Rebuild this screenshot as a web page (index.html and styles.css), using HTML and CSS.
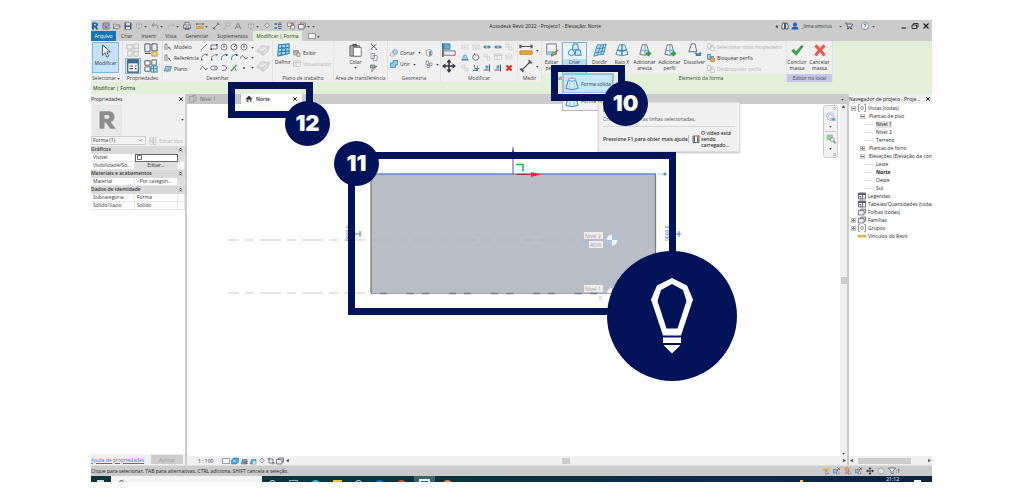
FILE: index.html
```html
<!DOCTYPE html>
<html lang="pt-BR">
<head>
<meta charset="utf-8">
<title>Autodesk Revit 2022 - Projeto1 - Elevação: Norte</title>
<link rel="stylesheet" href="styles.css">
</head>
<body>
<svg class="sprite" aria-hidden="true">
  <symbol id="logo" viewBox="0 0 16 16"><path d="M2 15V1h7q5 0 5 4.500q0 3-3 4l4 5.500h-4.500L7 10H6v5zM6 4v3h2.500q1.500 0 1.500-1.500T8.500 4z" fill="currentColor" fill-rule="evenodd"/></symbol>
  <symbol id="doc" viewBox="0 0 16 16"><path d="M2 2h12v12H2zM2 6h12M5 9h6M5 11h6" fill="none" stroke="#556" stroke-width="1.500"/></symbol>
  <symbol id="open" viewBox="0 0 16 16"><path d="M1 13V4h5l1 2h6v3M1 13l3-5h11l-3 5z" fill="#eee" stroke="#667" stroke-width="1.400"/></symbol>
  <symbol id="save" viewBox="0 0 16 16"><path d="M1 1h12l2 2v12H1z" fill="#4b5870"/><path d="M4 2h8v5H4zM4 10h8v4H4z" fill="#dde"/></symbol>
  <symbol id="sync" viewBox="0 0 16 16"><path d="M3 4l5-2 5 2v7l-5 3-5-3zM3 4l5 2 5-2M8 6v8" fill="#ddd" stroke="#999" stroke-width="1.300"/></symbol>
  <symbol id="undo" viewBox="0 0 16 16"><path d="M6 2L2 6l4 4M2 6h8q5 0 4 7" fill="none" stroke="#778" stroke-width="1.600"/></symbol>
  <symbol id="redo" viewBox="0 0 16 16"><path d="M10 2l4 4-4 4M14 6H6q-5 0-4 7" fill="none" stroke="#aab" stroke-width="1.600"/></symbol>
  <symbol id="print" viewBox="0 0 16 16"><path d="M4 6V1h8v5M1 6h14v7H1zM4 10h8v5H4z" fill="#eee" stroke="#556" stroke-width="1.500"/></symbol>
  <symbol id="measure" viewBox="0 0 16 16"><path d="M1 4h14M1 2v4M15 2v4M3 2L1 4l2 2M13 2l2 2-2 2" fill="none" stroke="#555" stroke-width="1.200"/><path d="M1 9h14v4H1z" fill="#efa935" stroke="#b98731"/></symbol>
  <symbol id="dim" viewBox="0 0 16 16"><path d="M3 13L13 3M1 11l4 4M11 1l4 4" fill="none" stroke="#445" stroke-width="1.300"/><path d="M2 14l1-4 3 3zM14 2l-4 1 3 3z" fill="#556"/></symbol>
  <symbol id="tag" viewBox="0 0 16 16"><circle cx="10" cy="5" r="4" fill="none" stroke="#99a"/><path d="M7 8l-6 6h6" fill="none" stroke="#99a"/></symbol>
  <symbol id="letter" viewBox="0 0 16 16"><path d="M2 14L8 2l6 12M4 10h8" fill="none" stroke="#777" stroke-width="1.800"/></symbol>
  <symbol id="home" viewBox="0 0 16 16"><path d="M1 8l7-7 7 7z" fill="#334"/><path d="M3 8h10v6H3z" fill="#667"/><path d="M7 10h3v4H7z" fill="#fff"/></symbol>
  <symbol id="section" viewBox="0 0 16 16"><path d="M8 2l5 5-5 5-5-5z" fill="#ddd" stroke="#778" stroke-width="1.300"/></symbol>
  <symbol id="thin" viewBox="0 0 16 16"><path d="M1 2h5v4H1zM1 10h5v4H1z" fill="#3b85bb"/><path d="M8 2h7M8 5h7M8 9h7M8 13h7" stroke="#445" stroke-width="1.600"/></symbol>
  <symbol id="closewin" viewBox="0 0 16 16"><path d="M1 2h8v7H1zM7 7h8v7H7z" fill="#eee" stroke="#667" stroke-width="1.300"/><path d="M9 1l5 5M14 1L9 6" stroke="#d43a2f" stroke-width="1.800"/></symbol>
  <symbol id="windows" viewBox="0 0 16 16"><path d="M1 5h11v9H1zM5 5V2h10v8h-3" fill="#eee" stroke="#556" stroke-width="1.500"/></symbol>
  <symbol id="binoc" viewBox="0 0 16 16"><path d="M2 14V7l2-5h3v12zM14 14V7l-2-5H9v12zM7 6h2" fill="#eee" stroke="#334" stroke-width="1.600"/></symbol>
  <symbol id="user" viewBox="0 0 16 16"><circle cx="8" cy="5" r="4" fill="#1c62ad"/><path d="M1 15q0-6 7-6t7 6z" fill="#1c62ad"/></symbol>
  <symbol id="cart" viewBox="0 0 16 16"><path d="M0 2h3l2 8h8l2-6H4" fill="#cde" stroke="#345" stroke-width="1.500"/><circle cx="6" cy="13" r="1.500"/><circle cx="12" cy="13" r="1.500"/></symbol>
  <symbol id="help" viewBox="0 0 16 16"><circle cx="8" cy="8" r="7" fill="#fff" stroke="#456" stroke-width="1.200"/><path d="M6 6q0-2 2-2t2 2q0 1-2 2.500V10M8 11.500V13" fill="none" stroke="#15a" stroke-width="1.600"/></symbol>
  <symbol id="x" viewBox="0 0 16 16"><path d="M3 3l10 10M13 3L3 13" stroke="currentColor" stroke-width="2.600"/></symbol>
  <symbol id="min" viewBox="0 0 16 16"><path d="M3 12h9" stroke="#222" stroke-width="2.200"/></symbol>
  <symbol id="restore" viewBox="0 0 16 16"><path d="M2 6h9v7H2zM5 6V3h9v7h-3" fill="none" stroke="#222" stroke-width="1.800"/></symbol>
  <symbol id="cursor" viewBox="0 0 16 16"><path d="M4 1v12l3-3 2 5 2-1-2-5h4z" fill="#fff" stroke="#456" stroke-width="1.100"/></symbol>
  <symbol id="types" viewBox="0 0 16 16"><path d="M1 2h6v5H1zM2 9h5v6H2zM9 1h5v14H9zM9 6h5M9 10h5" fill="#eee" stroke="#bbb" stroke-width="1.100"/></symbol>
  <symbol id="family" viewBox="0 0 16 16"><path d="M1 1h6v9H1zM9 1h6v8H9zM1 12h7" fill="#e6ebf0" stroke="#556" stroke-width="1.100"/><path d="M9 10h6v5H9z" fill="#f4d37c" stroke="#b59a50"/></symbol>
  <symbol id="props" viewBox="0 0 16 16"><path d="M2 1h12v14H2z" fill="#fff" stroke="#345" stroke-width="1.200"/><path d="M2 1h12v4H2z" fill="#3a6a90"/><path d="M4 8h4M4 11h4M10 8h2M10 11h2" stroke="#345" stroke-width="1.300"/></symbol>
  <symbol id="famtypes" viewBox="0 0 16 16"><path d="M1 2h6v5H1zM1 9h6v5H1zM9 1h5v6H9z" fill="#fff" stroke="#556" stroke-width="1.100"/><path d="M8 8h7v7H8zM8 11h7M11 8v7" fill="#bfe2f5" stroke="#3681ad"/></symbol>
  <symbol id="model" viewBox="0 0 16 16"><path d="M2 14V2h4M6 2v12M10 9l4 5M9 8l1 3 2-1z" fill="none" stroke="#556" stroke-width="1.300"/></symbol>
  <symbol id="plane" viewBox="0 0 16 16"><path d="M3 3h12l-3 9H1z" fill="#8bc7ec" stroke="#2a79ae" stroke-width="1.300"/><path d="M5 15l7-9" stroke="#e58d3a" stroke-width="1.800"/></symbol>
  <symbol id="line" viewBox="0 0 16 16"><path d="M2 14L14 2" stroke="#445" stroke-width="1.400"/></symbol>
  <symbol id="rect" viewBox="0 0 16 16"><path d="M2 12V4h12v8z" fill="none" stroke="#445" stroke-width="1.400"/><path d="M1 11h3v3H1zM12 2h3v3h-3z" fill="#445"/></symbol>
  <symbol id="poly" viewBox="0 0 16 16"><circle cx="8" cy="8" r="6" fill="none" stroke="#445" stroke-width="1.300"/><path d="M8 8V3M6 8h4" stroke="#445" stroke-width="1.300"/></symbol>
  <symbol id="circle" viewBox="0 0 16 16"><circle cx="8" cy="8" r="6" fill="none" stroke="#445" stroke-width="1.300"/><path d="M8 8l4-4" stroke="#c33" stroke-width="1.500"/></symbol>
  <symbol id="arc" viewBox="0 0 16 16"><path d="M3 14Q2 3 13 3" fill="none" stroke="#556" stroke-width="1.400"/><path d="M2 12h3v3H2zM12 2h3v3h-3z" fill="#556"/></symbol>
  <symbol id="arcb" viewBox="0 0 16 16"><path d="M3 14Q2 3 13 3" fill="none" stroke="#1b87c9" stroke-width="2"/><path d="M12 2h3v4h-3z" fill="#445"/></symbol>
  <symbol id="spline" viewBox="0 0 16 16"><path d="M1 11Q4 1 8 8t7 0" fill="none" stroke="#445" stroke-width="1.400"/></symbol>
  <symbol id="ellipse" viewBox="0 0 16 16"><ellipse cx="8" cy="8" rx="7" ry="4" fill="none" stroke="#445" stroke-width="1.300"/><path d="M8 8h5" stroke="#445"/></symbol>
  <symbol id="halfell" viewBox="0 0 16 16"><path d="M4 3q9 0 9 5t-9 5" fill="none" stroke="#445" stroke-width="1.400"/></symbol>
  <symbol id="pick" viewBox="0 0 16 16"><path d="M2 14L13 2" stroke="#2ba336" stroke-width="2.400"/><path d="M9 8l5 5-3 0z" fill="#445"/></symbol>
  <symbol id="dot" viewBox="0 0 16 16"><circle cx="8" cy="8" r="2" fill="#445"/></symbol>
  <symbol id="face" viewBox="0 0 16 16"><path d="M1 9l5-6 9 1-1 5-6 5zM1 9l6 1 8-6M7 10l1 4" fill="#e0e0e0" stroke="#c2c2c2"/></symbol>
  <symbol id="setplane" viewBox="0 0 16 16"><path d="M3 2l12-1v11L2 15zM7 2l-1 13M11 1v12M3 6l12-1M2 10l13-1" fill="#a6d5ef" stroke="#2d83b8" stroke-width="1.200"/></symbol>
  <symbol id="showplane" viewBox="0 0 16 16"><path d="M1 3h10v9H1zM4 3v9M8 3v9M1 6h10" fill="#d8e8f2" stroke="#667"/><path d="M8 8h6v7H8z" fill="#f6d58a" stroke="#667"/></symbol>
  <symbol id="viewer" viewBox="0 0 16 16"><path d="M1 2h14v11H1zM1 5h14M6 5v8" fill="#eee" stroke="#bbb" stroke-width="1.200"/></symbol>
  <symbol id="screen" viewBox="0 0 16 16"><path d="M1 3h14v10H1z" fill="#fff" stroke="#667" stroke-width="1.300"/></symbol>
  <symbol id="paste" viewBox="0 0 16 16"><path d="M1 3h11v12H1z" fill="#aaa" stroke="#666"/><path d="M4 1h5v3H4z" fill="#555"/><path d="M5 5h9v10H5z" fill="#fff" stroke="#667"/></symbol>
  <symbol id="cut" viewBox="0 0 16 16"><path d="M2 2l11 10M13 2L2 12M2 2h2M3 13h2M11 13h3" stroke="#445" stroke-width="1.700"/></symbol>
  <symbol id="copy" viewBox="0 0 16 16"><path d="M2 1h7v10H2zM6 5h8v10H6z" fill="#fff" stroke="#667" stroke-width="1.200"/></symbol>
  <symbol id="match" viewBox="0 0 16 16"><path d="M1 2h9v6H1z" fill="#9ab" stroke="#445"/><path d="M14 4l-7 8-4 3 1-5z" fill="#fff" stroke="#445" stroke-width="1.200"/></symbol>
  <symbol id="cutgeo" viewBox="0 0 16 16"><circle cx="10" cy="6" r="5" fill="#a9d7f2" stroke="#2c7fb4"/><path d="M1 8h7v6H1z" fill="#fff" stroke="#d44"/></symbol>
  <symbol id="join" viewBox="0 0 16 16"><path d="M6 1h9v9h-4v5H1V6h5z" fill="#8fcbee" stroke="#2378b0" stroke-width="1.400"/></symbol>
  <symbol id="cope" viewBox="0 0 16 16"><path d="M3 3l7-2 4 3v8l-6 3-5-3z" fill="#fff" stroke="#556"/><path d="M8 5l5-2v9l-5 2z" fill="#4f9dca"/></symbol>
  <symbol id="beam" viewBox="0 0 16 16"><path d="M2 2h5v7H2zM9 6h5v5H9zM4 11h5v4H4z" fill="#eee" stroke="#667" stroke-width="1.200"/></symbol>
  <symbol id="align" viewBox="0 0 16 16"><path d="M1 0v16" stroke="#334" stroke-width="1.400"/><path d="M2 1h7v6H2z" fill="#62aee0" stroke="#2477ad"/><path d="M2 9h13v5H2z" fill="#eee" stroke="#667"/></symbol>
  <symbol id="move" viewBox="0 0 16 16"><path d="M8 0l3 4H5zM8 16l3-4H5zM0 8l4-3v6zM16 8l-4-3v6z" fill="#334"/><path d="M8 3v10M3 8h10" stroke="#334" stroke-width="1.800"/></symbol>
  <symbol id="mir" viewBox="0 0 16 16"><path d="M2 3v10l4-4zM14 3v10l-4-4zM8 1v14" fill="#eee" stroke="#bbb"/></symbol>
  <symbol id="split" viewBox="0 0 16 16"><path d="M0 8l5-4v8zM16 8l-5-4v8z" fill="#2a8bc6"/><path d="M4 8h3M9 8h3" stroke="#2a8bc6" stroke-width="3"/><path d="M8 4v8" stroke="#c55" stroke-width="1.200"/></symbol>
  <symbol id="off" viewBox="0 0 16 16"><path d="M2 2h6v6H2zM8 8h6v6H8z" fill="#eee" stroke="#bbb"/></symbol>
  <symbol id="offset" viewBox="0 0 16 16"><path d="M2 13l4-9h4l4 9z" fill="#9ed0ee" stroke="#2a7bb0"/><path d="M1 14h14" stroke="#445" stroke-width="1.500"/></symbol>
  <symbol id="rotate" viewBox="0 0 16 16"><path d="M10 3a6 6 0 1 1-5 0M5 0v4h4" fill="none" stroke="#445" stroke-width="1.500"/></symbol>
  <symbol id="ring" viewBox="0 0 16 16"><circle cx="8" cy="8" r="6" fill="#ddd" stroke="#999" stroke-width="1.500"/></symbol>
  <symbol id="trim" viewBox="0 0 16 16"><path d="M2 13h9V3M5 2v7h10" fill="none" stroke="#556" stroke-width="1.400"/><path d="M7 9h5v4H7z" fill="#2a8bc6"/></symbol>
  <symbol id="trimb" viewBox="0 0 16 16"><path d="M13 1v14M1 12h10" stroke="#445" stroke-width="1.800"/><path d="M5 3h6v6H5z" fill="#4aa0d4"/></symbol>
  <symbol id="del" viewBox="0 0 16 16"><path d="M3 3l10 10M13 3L3 13" stroke="#e12f25" stroke-width="4"/></symbol>
  <symbol id="editprof" viewBox="0 0 16 16"><path d="M2 1h11v12H2z" fill="#f3f3f3" stroke="#667"/><path d="M2 9h9l-3 5H2z" fill="#8bc7ec"/><path d="M15 8l-5 6-3 1 1-3z" fill="#efa935" stroke="#667"/></symbol>
  <symbol id="form" viewBox="0 0 16 16"><path d="M4 3L1 13q7 3 14 0L12 3z" fill="#d8eefb" stroke="#2d84ba" stroke-width="1.100"/><ellipse cx="8" cy="3" rx="4" ry="1.800" fill="#fff" stroke="#2d84ba"/><path d="M6 5L5 14M10 5l1 9" stroke="#99c6e0" fill="none"/></symbol>
  <symbol id="create" viewBox="0 0 16 16"><path d="M6 1h5l1 7H5z" fill="#cbe8f8" stroke="#2379b2"/><circle cx="4" cy="11" r="3.500" fill="#e5f4fc" stroke="#2379b2"/><path d="M9 8h5l1 6H8z" fill="#cbe8f8" stroke="#2379b2"/></symbol>
  <symbol id="divide" viewBox="0 0 16 16"><path d="M5 2q5 1 10-1l-3 12q-6 0-11 2zM9 2L5 14M12 2L9 13M4 6q5 1 10-1M2 11q5 0 11-2" fill="#b6dcf2" stroke="#3182b2"/></symbol>
  <symbol id="xray" viewBox="0 0 16 16"><path d="M5 2L1 13q7 3 14 0L11 2z" fill="#eaf5fb" stroke="#3182b2"/><path d="M8 2v12M3 8q5 2 10 0" fill="none" stroke="#3182b2" stroke-width="1.600"/></symbol>
  <symbol id="addform" viewBox="0 0 16 16"><path d="M5 2L2 13q6 2 11 0L10 2z" fill="#eef3f6" stroke="#667"/><path d="M8 2v12M3 8q4 2 9 0" fill="none" stroke="#4aa0d4"/><path d="M12 9v6M9 12h6" stroke="#22a13a" stroke-width="2.200"/></symbol>
  <symbol id="dissolve" viewBox="0 0 16 16"><path d="M4 1L1 10h9L8 1z" fill="#f5f5f5" stroke="#556"/><path d="M8 11q3 4 7 0M9 14h6" fill="none" stroke="#2d84ba" stroke-width="1.800"/></symbol>
  <symbol id="lock" viewBox="0 0 16 16"><path d="M1 6V1h6v10H1z" fill="#8bc7ec" stroke="#2d84ba" stroke-width="1.400"/><path d="M7 8h8v7H7z" fill="#efa935" stroke="#a86e1d"/><path d="M9 8V5h4v3" fill="none" stroke="#667" stroke-width="1.500"/></symbol>
  <symbol id="locko" viewBox="0 0 16 16"><path d="M1 6V1h6v10H1zM7 8h8v7H7zM9 8V4h4v2" fill="#eee" stroke="#bbb" stroke-width="1.300"/></symbol>
  <symbol id="check" viewBox="0 0 16 16"><path d="M2 9l2-2 3 3 6-7 2 1-8 10z" fill="#3fa447" stroke="#2b7d33" stroke-width=".8"/></symbol>
  <symbol id="cancel" viewBox="0 0 16 16"><path d="M4 2l4 4 4-4 2 2-4 4 4 5-2 2-4-5-4 5-2-2 4-5-4-4z" fill="#f0564a" stroke="#cc3b30" stroke-width=".6"/></symbol>
  <symbol id="sheet" viewBox="0 0 16 16"><path d="M1 3h9v11H1zM6 1h8v11h-4" fill="none" stroke="#889" stroke-width="1.200"/></symbol>
  <symbol id="views" viewBox="0 0 16 16"><path d="M4 1H1v14h3M12 1h3v14h-3" fill="none" stroke="#667" stroke-width="1.300"/><circle cx="8" cy="8" r="3" fill="none" stroke="#667" stroke-width="1.300"/></symbol>
  <symbol id="legend" viewBox="0 0 16 16"><path d="M1 2h14v12H1z" fill="#fff" stroke="#445" stroke-width="1.500"/><path d="M1 2h14v4H1z" fill="#567"/><path d="M3 9h4M3 12h4M9 6v8" stroke="#445" stroke-width="1.500"/></symbol>
  <symbol id="link" viewBox="0 0 16 16"><path d="M0 6h16v5H0z" fill="#f0a21c"/><path d="M5 8.500h6" stroke="#fff" stroke-width="1"/></symbol>
  <symbol id="wheel" viewBox="0 0 16 16"><circle cx="7" cy="7" r="6" fill="#eee" stroke="#9aa3ad"/><circle cx="7" cy="7" r="3" fill="#fff" stroke="#9aa3ad"/><path d="M9 10h6v4H9z" fill="#5aa2d6"/></symbol>
  <symbol id="zoomr" viewBox="0 0 16 16"><path d="M1 1h10v9H1z" fill="#8ed08f"/><circle cx="10" cy="9" r="3" fill="#fff" stroke="#667"/><path d="M12 11l3 4" stroke="#667" stroke-width="2"/></symbol>
  <symbol id="bluebox" viewBox="0 0 16 16"><path d="M5 2h10v8l-4 4H1V6z" fill="#48a5dd" stroke="#1d6ea8"/><path d="M4 8h5" stroke="#fff" stroke-width="2"/></symbol>
  <symbol id="sun" viewBox="0 0 16 16"><path d="M2 14l3-9h9v9z" fill="#5aa9d8" stroke="#456"/><path d="M9 8l6 6M15 8l-6 6" stroke="#dc3a2e" stroke-width="2"/></symbol>
  <symbol id="shadow" viewBox="0 0 16 16"><path d="M2 14l3-9h9v9z" fill="#5aa9d8" stroke="#37749c"/><path d="M8 8h5v6H8z" fill="#d9ecf8"/></symbol>
  <symbol id="crop" viewBox="0 0 16 16"><path d="M4 1v11h12M1 4h11v11" fill="none" stroke="#556" stroke-width="1.500"/></symbol>
  <symbol id="selpin" viewBox="0 0 16 16"><path d="M1 3h13v4H1z" fill="#efa935"/><path d="M8 6v9l2-3 3 1z" fill="#fff" stroke="#556"/></symbol>
  <symbol id="selred" viewBox="0 0 16 16"><path d="M1 5h8v7H1z" fill="#7dbde6" stroke="#39698c"/><path d="M9 1l5 5M14 1L9 6" stroke="#dc3a2e" stroke-width="2"/><path d="M8 7v8l2-2 3 0z" fill="#fff" stroke="#556"/></symbol>
  <symbol id="selor" viewBox="0 0 16 16"><circle cx="6" cy="5" r="4" fill="#f3a35c" stroke="#d8592c"/><path d="M2 12h8" stroke="#d8592c" stroke-width="2"/><path d="M9 7v8l2-2 3 0z" fill="#fff" stroke="#556"/></symbol>
  <symbol id="filter" viewBox="0 0 16 16"><path d="M1 2h14L10 8v6l-4-2V8z" fill="#e7edf3" stroke="#456" stroke-width="1.400"/></symbol>
  <symbol id="film" viewBox="0 0 16 16"><path d="M2 2h12v13H2zM5 2v13M11 2v13M2 6h3M2 10h3M11 10h3" fill="#fff" stroke="#345" stroke-width="1.500"/><circle cx="13" cy="3" r="3" fill="#f0763a"/></symbol>
  <symbol id="down" viewBox="0 0 8 8"><path d="M2 3h4L4 6z" fill="currentColor"/></symbol>
  <symbol id="chev" viewBox="0 0 8 8"><path d="M1 2l3 3 3-3" fill="none" stroke="currentColor"/></symbol>
  <symbol id="fold" viewBox="0 0 8 8"><path d="M2 4l2-2 2 2M2 7l2-2 2 2" fill="none" stroke="currentColor" stroke-width="1.400"/></symbol>
  <symbol id="up" viewBox="0 0 8 8"><path d="M1 6h6L4 2z" fill="currentColor"/></symbol>
  <symbol id="left" viewBox="0 0 8 8"><path d="M6 1v6L2 4z" fill="currentColor"/></symbol>
  <symbol id="right" viewBox="0 0 8 8"><path d="M2 1v6l4-3z" fill="currentColor"/></symbol>
</svg>

<main class="app">
  <header class="titlebar">
    <div class="quick">
      <svg class="i8 brand"><use href="#logo"/></svg><svg class="i8"><use href="#doc"/></svg><svg class="i8"><use href="#open"/></svg><svg class="i8"><use href="#save"/></svg><svg class="i8"><use href="#sync"/></svg><svg class="caret"><use href="#down"/></svg><svg class="i8"><use href="#undo"/></svg><svg class="caret"><use href="#down"/></svg><svg class="i8"><use href="#redo"/></svg><svg class="caret"><use href="#down"/></svg><svg class="i8"><use href="#print"/></svg><span class="gap"></span><svg class="i8"><use href="#measure"/></svg><svg class="caret"><use href="#down"/></svg><svg class="i8"><use href="#dim"/></svg><svg class="i8"><use href="#tag"/></svg><svg class="i8"><use href="#letter"/></svg><span class="gap"></span><svg class="i8"><use href="#sync"/></svg><svg class="caret"><use href="#down"/></svg><svg class="i8"><use href="#section"/></svg><svg class="i8"><use href="#thin"/></svg><span class="gap"></span><svg class="i8"><use href="#closewin"/></svg><svg class="i8"><use href="#windows"/></svg><svg class="caret"><use href="#down"/></svg><svg class="caret"><use href="#down"/></svg>
    </div>
    <h1 class="title">Autodesk Revit 2022 - Projeto1 - Elevação: Norte</h1>
    <div class="account">
      <svg class="caret"><use href="#left"/></svg><svg class="i8"><use href="#binoc"/></svg><svg class="i8"><use href="#user"/></svg><span class="username">_lima.vinicius</span><svg class="caret"><use href="#down"/></svg><svg class="i8"><use href="#cart"/></svg><svg class="i8 help"><use href="#help"/></svg><svg class="caret"><use href="#down"/></svg>
      <div class="winbtns"><svg class="i8"><use href="#min"/></svg><svg class="i8"><use href="#restore"/></svg><svg class="i8"><use href="#x"/></svg></div>
    </div>
  </header>

  <nav class="tabs">
    <button class="tab file">Arquivo</button><button class="tab">Criar</button><button class="tab">Inserir</button><button class="tab">Vista</button><button class="tab">Gerenciar</button><button class="tab">Suplementos</button><button class="tab current">Modificar | Forma</button>
    <span class="ribbon-mode"><svg class="i8"><use href="#screen"/></svg><svg class="caret"><use href="#down"/></svg></span>
  </nav>

  <section class="ribbon">
    <div class="panel w-select">
      <div class="body"><button class="big active"><svg class="i14"><use href="#cursor"/></svg><span>Modificar</span></button></div>
      <div class="plabel">Selecionar <svg class="caret"><use href="#down"/></svg></div>
    </div>
    <div class="panel w-props">
      <div class="body propgrid"><svg class="i14"><use href="#types"/></svg><svg class="i14"><use href="#family"/></svg><svg class="i14 on"><use href="#props"/></svg><svg class="i14"><use href="#famtypes"/></svg></div>
      <div class="plabel">Propriedades</div>
    </div>
    <div class="panel w-draw">
      <div class="body">
        <div class="list wide"><button class="row"><svg class="i8"><use href="#model"/></svg>Modelo</button><button class="row"><svg class="i8"><use href="#model"/></svg>Referência</button><button class="row"><svg class="i8"><use href="#plane"/></svg>Plano</button></div>
        <div class="tools six">
          <svg class="i8"><use href="#line"/></svg><svg class="i8"><use href="#rect"/></svg><svg class="i8"><use href="#poly"/></svg><svg class="i8"><use href="#circle"/></svg><svg class="i8"><use href="#poly"/></svg><svg class="caret"><use href="#down"/></svg>
          <svg class="i8"><use href="#arc"/></svg><svg class="i8"><use href="#arc"/></svg><svg class="i8"><use href="#arcb"/></svg><svg class="i8"><use href="#arcb"/></svg><svg class="i8"><use href="#spline"/></svg><svg class="caret"><use href="#down"/></svg>
          <svg class="i8"><use href="#spline"/></svg><svg class="i8"><use href="#ellipse"/></svg><svg class="i8"><use href="#halfell"/></svg><svg class="i8"><use href="#pick"/></svg><svg class="i8"><use href="#dot"/></svg><svg class="caret"><use href="#down"/></svg>
        </div>
        <div class="faces"><svg class="i14"><use href="#face"/></svg><svg class="i14"><use href="#face"/></svg></div>
      </div>
      <div class="plabel">Desenhar</div>
    </div>
    <div class="panel w-plane">
      <div class="body">
        <button class="big"><svg class="i14"><use href="#setplane"/></svg><span>Definir</span></button>
        <div class="list two"><button class="row"><svg class="i8"><use href="#showplane"/></svg>Exibir</button><button class="row" disabled><svg class="i8"><use href="#viewer"/></svg>Visualizador</button></div>
      </div>
      <div class="plabel">Plano de trabalho</div>
    </div>
    <div class="panel w-clip">
      <div class="body center">
        <button class="big"><svg class="i14"><use href="#paste"/></svg><span>Colar</span><svg class="caret"><use href="#down"/></svg></button>
        <div class="tools one"><svg class="i8"><use href="#cut"/></svg><svg class="i8"><use href="#copy"/></svg><svg class="i8"><use href="#match"/></svg></div>
      </div>
      <div class="plabel">Área de transferência</div>
    </div>
    <div class="panel w-geo">
      <div class="body">
        <div class="list two"><button class="row"><svg class="i8"><use href="#cutgeo"/></svg>Cortar<svg class="caret"><use href="#down"/></svg></button><button class="row"><svg class="i8"><use href="#join"/></svg>Unir<svg class="caret"><use href="#down"/></svg></button></div>
        <div class="list two"><button class="row"><svg class="i8"><use href="#cope"/></svg></button><button class="row"><svg class="i8"><use href="#beam"/></svg><svg class="caret"><use href="#down"/></svg></button></div>
      </div>
      <div class="plabel">Geometria</div>
    </div>
    <div class="panel w-mod">
      <div class="body">
        <div class="faces"><svg class="i14"><use href="#align"/></svg><svg class="i14"><use href="#move"/></svg></div>
        <div class="tools five">
          <svg class="i8"><use href="#mir"/></svg><svg class="i8"><use href="#mir"/></svg><svg class="i8"><use href="#split"/></svg><svg class="i8"><use href="#split"/></svg><svg class="i8"><use href="#off"/></svg>
          <svg class="i8"><use href="#offset"/></svg><svg class="i8"><use href="#rotate"/></svg><svg class="i8"><use href="#off"/></svg><svg class="i8"><use href="#viewer"/></svg><svg class="i8"><use href="#mir"/></svg>
          <svg class="i8"><use href="#off"/></svg><svg class="i8"><use href="#trim"/></svg><svg class="i8"><use href="#trimb"/></svg><svg class="i8"><use href="#trimb"/></svg><svg class="i8"><use href="#del"/></svg>
        </div>
      </div>
      <div class="plabel">Modificar</div>
    </div>
    <div class="panel w-med">
      <div class="body"><div class="faces"><svg class="i14"><use href="#measure"/></svg><svg class="i14"><use href="#dim"/></svg></div><div class="faces"><svg class="caret"><use href="#down"/></svg><svg class="caret"><use href="#down"/></svg></div></div>
      <div class="plabel">Medir</div>
    </div>
    <div class="panel ctx w-edit">
      <div class="body"><button class="big"><svg class="i14"><use href="#editprof"/></svg><span>Editar<br>perfil</span></button></div>
      <div class="plabel start">Modo</div>
    </div>
    <div class="panel ctx w-form">
      <div class="body">
        <button class="big open w25"><svg class="i14"><use href="#create"/></svg><span>Criar<br>forma</span></button>
        <button class="big w25"><svg class="i14"><use href="#divide"/></svg><span>Dividir</span></button>
        <button class="big w20"><svg class="i14"><use href="#xray"/></svg><span>Raio X</span></button>
        <button class="big w25"><svg class="i14"><use href="#addform"/></svg><span>Adicionar<br>aresta</span></button>
        <button class="big w25"><svg class="i14"><use href="#addform"/></svg><span>Adicionar<br>perfil</span></button>
        <button class="big w25"><svg class="i14"><use href="#dissolve"/></svg><span>Dissolver</span></button>
        <div class="list"><button class="row" disabled><svg class="i8"><use href="#locko"/></svg>Selecionar novo hospedeiro</button><button class="row"><svg class="i8"><use href="#lock"/></svg>Bloquear perfis</button><button class="row" disabled><svg class="i8"><use href="#locko"/></svg>Desbloquear perfis</button></div>
      </div>
      <div class="plabel shift">Elemento da forma</div>
    </div>
    <div class="panel w-end">
      <div class="body"><button class="big w20"><svg class="i14"><use href="#check"/></svg><span>Concluir<br>massa</span></button><button class="big w25"><svg class="i14"><use href="#cancel"/></svg><span>Cancelar<br>massa</span></button></div>
      <div class="plabel">Editor no local</div>
    </div>
  </section>

  <div class="options">Modificar | Forma</div>

  <div class="workspace">
    <aside class="properties">
      <div class="phead"><span>Propriedades</span><svg class="i8"><use href="#x"/></svg></div>
      <div class="typebox"><span class="thumb"><svg><use href="#logo"/></svg></span><svg class="caret"><use href="#down"/></svg></div>
      <div class="selector">
        <span class="combo"><select aria-label="Seleção"><option>Forma (1)</option></select><svg class="caret"><use href="#chev"/></svg></span>
        <button class="row" disabled><svg class="i8"><use href="#types"/></svg>Editar tipo</button>
      </div>
      <table class="ptable">
        <colgroup><col class="c1"><col><col class="c3"></colgroup>
        <tbody>
          <tr class="group"><th colspan="2">Gráficos</th><th><svg class="caret"><use href="#fold"/></svg></th></tr>
          <tr><td><label for="vis">Visível</label></td><td class="focus"><input id="vis" type="checkbox" checked></td><td class="mini"></td></tr>
          <tr><td>Visibilidade/So...</td><td class="nopad"><button class="cellbtn">Editar...</button></td><td></td></tr>
          <tr class="group"><th colspan="2">Materiais e acabamentos</th><th><svg class="caret"><use href="#fold"/></svg></th></tr>
          <tr><td>Material</td><td>&lt;Por categori...</td><td class="mini"></td></tr>
          <tr class="group"><th colspan="2">Dados de identidade</th><th><svg class="caret"><use href="#fold"/></svg></th></tr>
          <tr><td>Subcategoria</td><td>Forma</td><td></td></tr>
          <tr><td>Sólido/Vazio</td><td>Sólido</td><td></td></tr>
        </tbody>
      </table>
      <div class="pfoot"><a href="#ajuda">Ajuda de propriedades</a><button disabled>Aplicar</button></div>
    </aside>

    <section class="view">
      <div class="vtabs">
        <button class="vtab"><svg class="i8"><use href="#sheet"/></svg>Nível 1</button>
        <button class="vtab current"><svg class="i8"><use href="#home"/></svg>Norte<svg class="i8 close"><use href="#x"/></svg></button>
        <svg class="caret last"><use href="#down"/></svg>
      </div>
      <div class="stage">
        <div class="canvas">
          <svg class="drawing" width="653" height="352" viewBox="0 0 653 352">
            <path d="M41 136H180M41 189H180" stroke="#ddd" stroke-width="1.500" stroke-dasharray="21 6 9 6" stroke-dashoffset="10"/>
            <rect x="184" y="70" width="285" height="119" fill="#b8bdc7"/>
            <path d="M184 136H405" stroke="#acb1ba" stroke-dasharray="21 6 9 6"/>
            <path d="M184 70V189M468.500 70V189" stroke="#777b82" stroke-width="1.300"/>
            <path d="M184 189.500H469" stroke="#a0a4ac"/>
            <path d="M184 189.500H469" stroke="#777b82" stroke-width="1.500" stroke-dasharray="7 8 7 20" stroke-dashoffset="6"/>
            <path d="M184 70H469" stroke="#5b8fd0" stroke-width="1.300"/>
            <path d="M471 70h6" stroke="#a8cdea"/><circle cx="478" cy="70" r="1.600" fill="#4b93cf"/>
            <path d="M326 43v27" stroke="#5a4a9c"/><path d="M324 51l2-6 2 6z" fill="#3a2a9c"/>
            <path d="M329 60.500h7v7" fill="none" stroke="#1cb04b" stroke-width="1.600"/>
            <path d="M330 70.500h16" stroke="#a02a3a"/><path d="M344 68l10 2.500-10 2.500z" fill="#e0303a"/>
            <rect x="397" y="128" width="19" height="7" fill="#eee"/><text x="398" y="134" class="lvl">Nível 2</text>
            <rect x="402" y="137" width="14" height="7" fill="#eee"/><text x="403" y="143" class="lvl">4000</text>
            <rect x="397" y="181" width="19" height="7" fill="#eee"/><text x="398" y="187" class="lvl">Nível 1</text>
            <text x="412" y="196" class="lvl">0</text>
            <circle cx="425" cy="136" r="5.500" fill="#b3c2d9"/><path d="M425 136v-5.500a5.500 5.500 0 0 0-5.500 5.500zM425 136v5.500a5.500 5.500 0 0 0 5.500-5.500z" fill="#eef4fd"/>
            <path d="M425 189v-5a5 5 0 0 0-5 5z" fill="#eef4fd"/>
            <text class="dimtext" transform="translate(163 137) rotate(-90)">9000.0</text>
            <path d="M168 130h6M173 127v6M488 130h6M492 127v6" stroke="#4480d4"/>
            <text class="dimtext" transform="translate(482 137) rotate(-90)">9000.0</text>
          </svg>
          <div class="navbar"><span class="ring"></span><svg class="i10"><use href="#wheel"/></svg><svg class="caret"><use href="#down"/></svg><hr><svg class="i10"><use href="#zoomr"/></svg><svg class="caret"><use href="#down"/></svg><span class="ring"></span></div>
        </div>
        <div class="vscroll"><svg class="caret"><use href="#up"/></svg><span class="vthumb"></span><svg class="caret"><use href="#down"/></svg></div>
      </div>
      <div class="viewbar">
        <span class="scale">1 : 100</span>
        <svg class="i8"><use href="#screen"/></svg><svg class="i8"><use href="#bluebox"/></svg><svg class="i8"><use href="#sun"/></svg><svg class="i8"><use href="#shadow"/></svg><svg class="i8"><use href="#section"/></svg><svg class="i8"><use href="#crop"/></svg><svg class="i8"><use href="#windows"/></svg><svg class="caret"><use href="#left"/></svg>
        <span class="hscroll"><span class="hthumb"></span></span><svg class="caret"><use href="#right"/></svg>
      </div>
    </section>

    <aside class="browser">
      <div class="phead"><span>Navegador de projeto - Proje...</span><svg class="i8"><use href="#x"/></svg></div>
      <ul class="tree">
        <li><i class="tg minus"></i><svg class="i8"><use href="#views"/></svg>Vistas (todas)
          <ul>
            <li><i class="tg minus"></i>Plantas de piso<ul><li><mark>Nível 1</mark></li><li>Nível 2</li><li>Terreno</li></ul></li>
            <li><i class="tg plus"></i>Plantas de forro</li>
            <li><i class="tg minus"></i>Elevações (Elevação da con<ul><li>Leste</li><li><b>Norte</b></li><li>Oeste</li><li>Sul</li></ul></li>
          </ul>
        </li>
        <li><i class="tg"></i><svg class="i8"><use href="#legend"/></svg>Legendas</li>
        <li><i class="tg"></i><svg class="i8"><use href="#legend"/></svg>Tabelas/Quantidades (todas</li>
        <li><i class="tg"></i><svg class="i8"><use href="#windows"/></svg>Folhas (todas)</li>
        <li><i class="tg plus"></i><svg class="i8"><use href="#windows"/></svg>Famílias</li>
        <li><i class="tg plus"></i><svg class="i8"><use href="#views"/></svg>Grupos</li>
        <li><i class="tg"></i><svg class="i8"><use href="#link"/></svg>Vínculos do Revit</li>
      </ul>
      <div class="bscroll"><svg class="caret"><use href="#left"/></svg><span class="bthumb"></span><svg class="caret end"><use href="#right"/></svg></div>
    </aside>
  </div>

  <footer class="status">
    <span>Clique para selecionar, TAB para alternativas, CTRL adiciona, SHIFT cancela a seleção.</span>
    <div class="sticons"><svg class="i8"><use href="#selpin"/></svg><svg class="i8"><use href="#selred"/></svg><svg class="i8"><use href="#selor"/></svg><svg class="i8"><use href="#selred"/></svg><svg class="i8"><use href="#move"/></svg><svg class="i8"><use href="#ring"/></svg><span class="filter"><svg class="i8"><use href="#filter"/></svg>:1</span></div>
  </footer>

  <div class="taskbar">
    <span class="start"></span><span class="search"><i></i></span>
    <div class="apps"><i class="o"></i><i class="t"></i><i class="edge"></i><i class="folder"></i><i class="o"></i><i class="blue"></i><i class="red"></i><i class="revit"></i><i class="orange"></i></div>
    <div class="tray"><i class="warn"></i><span class="clock">21:12</span><i class="note"></i></div>
  </div>

  <div class="menu">
    <button class="mitem on"><svg class="i14"><use href="#form"/></svg>Forma sólida</button>
    <button class="mitem"><svg class="i14"><use href="#form"/></svg>Forma vazia</button>
  </div>
  <div class="tooltip" role="tooltip">
    <b>Forma</b>
    <p>Cria formas com as linhas selecionadas.</p>
    <div class="tfoot"><b>Pressione F1 para obter mais ajuda</b><svg class="i8"><use href="#film"/></svg><b class="video">O vídeo está sendo carregado...</b></div>
  </div>

  <div class="frame f10"></div><div class="frame f11"></div><div class="frame f12"></div>
  <span class="badge b10">10</span><span class="badge b11">11</span><span class="badge b12">12</span>
  <div class="tip"><svg viewBox="0 0 130 130">
    <path fill-rule="evenodd" d="M65 27L80 34.500L86 48.500L74 84.500H56L44 48.500L50 34.500ZM65 33L54 39L50.500 50L59.500 77.500H70.500L79.500 50L76 39Z" fill="#fff"/>
    <path d="M56 86.500h18v5.500H56zM56.500 94h17L65 102.500z" fill="#fff"/>
  </svg></div>
</main>
</body>
</html>
```
FILE: styles.css
```css
* { box-sizing: border-box; }
body { margin: 0; background: #fff; font: 5px/8px "Open Sans", "Noto Sans", sans-serif; color: #333; }
button, select, input { font: inherit; color: inherit; margin: 0; padding: 0; border: 0; background: none; }
button { white-space: nowrap; }
svg { display: block; flex: none; }
.sprite { position: absolute; width: 0; height: 0; }
.i8 { width: 8px; height: 8px; }
.i10 { width: 10px; height: 10px; }
.i14 { width: 14px; height: 14px; }
.caret { width: 5px; height: 5px; color: #444; }

.app { position: relative; display: flex; flex-direction: column; min-height: calc(100vh - 39px); margin: 20px 92px 19px 91px; }

.titlebar { display: flex; align-items: center; justify-content: space-between; height: 11px; padding-top: 1px; background: #cbcbcb; overflow: hidden; }
.quick { display: flex; align-items: center; }
.quick .i8 + .i8 { margin-left: 3px; }
.quick .caret + .i8 { margin-left: 3px; }
.quick .gap { width: 5px; }
.brand { color: #1b65ad; }
.title { margin: 0; font-size: 5px; font-weight: 400; color: #222; }
.account { display: flex; align-items: center; gap: 2px; }
.username { margin-right: 4px; }
.account .i8 + .i8.help { margin-left: 6px; }
.winbtns { display: flex; gap: 3px; margin: 0 2px 0 22px; color: #222; }

.tabs { display: flex; align-items: center; height: 10px; background: #cbcbcb; }
.tab { height: 10px; margin-right: 9px; }
.tab.file { width: 25px; margin-right: 5px; background: #1474b8; color: #fff; }
.tab.current { width: 49px; margin: 0; margin-left: -4px; background: #e2f0d9; }
.ribbon-mode { display: flex; align-items: center; margin-left: 6px; }

.ribbon { display: flex; height: 41px; background: #e2f0d9; }
.panel { display: flex; flex-direction: column; flex: none; background: #efefef; border-right: 1px solid #e2e2e2; }
.body { display: flex; height: 33px; padding-top: 1px; overflow: hidden; }
.plabel { display: flex; justify-content: center; align-items: center; height: 8px; white-space: nowrap; color: #444; }
.ctx .plabel { background: #e2f0d9; }
.plabel.start { justify-content: flex-start; padding-left: 3px; }
.plabel.shift { padding-left: 54px; }
.center { justify-content: center; }
.w-select { width: 32px; } .w-props { width: 40px; } .w-draw { width: 110px; } .w-plane { width: 61px; }
.w-clip { width: 54px; } .w-geo { width: 53px; } .w-mod { width: 77px; } .w-med { width: 24px; }
.w-edit { width: 20px; } .w-form { width: 225px; } .w-end { width: 46px; }
.w-end .plabel { background: #c6c6e6; }
.w-geo .body { padding-left: 2px; }
.big { display: flex; flex-direction: column; align-items: center; flex: none; padding-top: 1px; line-height: 6px; }
.big span { padding-top: 2px; }
.big.active { width: 27px; height: 31px; margin-left: 1px; background: #c4e1f5; border: 1px solid #7db4dc; padding-top: 1px; }
.big.open { border: 1px solid #7db4dc; background: linear-gradient(#e8f3fa 16px, #b9dcf3 16px); padding-top: 0; }
.w20 { width: 20px; } .w25 { width: 25px; }
.w-plane .big { width: 20px; } .w-edit .big { width: 19px; } .w-clip .big { width: 26px; }
.propgrid { display: grid; grid-template-columns: 16px 16px; gap: 2px; justify-content: center; padding-top: 0; align-content: center; }
.on { background: #c4e1f5; outline: 1px solid #7db4dc; }
.list { display: flex; flex-direction: column; justify-content: space-around; }
.list.wide { width: 36px; padding-left: 1px; }
.list.two { padding: 5px 3px 4px 0; }
.row { display: flex; align-items: center; gap: 2px; height: 8px; }
.row:disabled { color: #b4b4b4; }
.tools { display: grid; align-items: center; justify-items: center; padding-bottom: 1px; }
.six { grid-template-columns: repeat(5, 10px) 6px; }
.five { grid-template-columns: repeat(5, 11px); margin-left: 2px; }
.one { grid-template-columns: 10px; }
.faces { display: flex; flex-direction: column; justify-content: space-around; padding: 0 1px; }

.options { height: 12px; padding: 2px; background: #e2f0d9; color: #222; }

.workspace { display: flex; flex: 1; min-height: 0; }
.properties { display: flex; flex-direction: column; width: 96px; flex: none; border-right: 2px solid #cbcbcb; background: #fff; }
.phead { display: flex; align-items: center; justify-content: space-between; height: 10px; background: #efefef; white-space: nowrap; color: #222; }
.phead .i8 { width: 6px; height: 6px; margin-right: 1px; }
.typebox { display: flex; align-items: center; justify-content: space-between; height: 31px; background: #f0f0f0; }
.thumb { margin-left: 1px; padding: 4px; background: #e9e9e9; color: #8c8c8c; border: 1px solid #e4e4e4; }
.thumb svg { width: 20px; height: 20px; }
.selector { display: flex; align-items: center; justify-content: space-between; height: 11px; background: #f0f0f0; padding-right: 2px; }
.combo { display: flex; align-items: center; width: 55px; height: 9px; padding: 0 2px 0 1px; border: 1px solid #ccc; background: #f3f3f3; }
.combo select { flex: 1; appearance: none; height: 7px; line-height: 7px; }
.ptable { width: 100%; border-collapse: separate; border-spacing: 0; table-layout: fixed; }
.c1 { width: 44px; } .c3 { width: 7px; }
.ptable td, .ptable th { height: 8px; padding: 0 0 0 2px; text-align: left; line-height: 7px; font-weight: 400; border: 0 solid #e5e5e5; border-width: 0 1px 1px 0; white-space: nowrap; }
.ptable .group th { background: #d9d9d9; border-color: #d9d9d9; padding-left: 0; font-weight: 600; }
.ptable .focus { outline: 1px solid #666; outline-offset: -1px; }
.ptable .mini { background: #dcdcdc; }
.ptable .nopad { padding: 0; }
.ptable input { display: block; appearance: none; width: 5px; height: 5px; border: 1px solid #777; background: #fff; }
.cellbtn { display: block; width: 100%; height: 7px; background: #dedede; }
.pfoot { display: flex; align-items: center; justify-content: space-between; height: 11px; margin-top: auto; padding-right: 2px; background: #f0f0f0; }
.pfoot a { color: #1c87cf; }
.pfoot button { width: 32px; height: 9px; background: #ccc; color: #999; }

.view { display: flex; flex-direction: column; flex: 1; min-width: 0; }
.vtabs { display: flex; align-items: center; height: 10px; background: #cbcbcb; }
.vtab { display: flex; align-items: center; gap: 3px; width: 54px; height: 10px; padding-left: 2px; color: #666; background: #c5c5c5; border-right: 1px solid #bbb; }
.vtab.current { width: 61px; padding-left: 4px; background: #fff; color: #222; border: 0; font-weight: 600; }
.vtab .close { width: 6px; height: 6px; margin-left: auto; margin-right: 4px; }
.last { margin-left: auto; margin-right: 2px; }
.stage { display: flex; flex: 1; min-height: 0; }
.canvas { position: relative; flex: 1; min-width: 0; overflow: hidden; background: #fff; }
.lvl { font-size: 5px; fill: #999; }
.dimtext { font-size: 5px; fill: #2f6fd0; }
.navbar { position: absolute; top: 1px; right: 2px; display: flex; flex-direction: column; align-items: center; gap: 2px; width: 15px; padding: 1px; border: 1px solid #ccc; border-radius: 3px; background: #f1f1f1; }
.navbar hr { width: 11px; margin: 0; border: 0; border-top: 1px solid #ccc; }
.ring { width: 3px; height: 3px; border: 1px solid #aaa; border-radius: 50%; align-self: flex-end; }
.vscroll { display: flex; flex-direction: column; justify-content: space-between; align-items: center; width: 7px; background: #f0f0f0; }
.vthumb { width: 6px; height: 7px; background: #ccc; }
.viewbar { display: flex; align-items: center; gap: 1px; height: 9px; padding-left: 11px; background: #f0f0f0; white-space: nowrap; }
.scale { margin-right: 8px; }
.hscroll { flex: 1; display: flex; justify-content: center; }
.hthumb { width: 8px; height: 6px; background: #ccc; }

.browser { position: relative; display: flex; flex-direction: column; width: 85px; flex: none; border-left: 2px solid #cbcbcb; overflow: hidden; }
.tree, .tree ul { margin: 0; padding: 0; list-style: none; white-space: nowrap; color: #222; }
.tree { padding: 0 0 0 2px; }
.tree ul { padding-left: 9px; }
.tree ul ul { padding-left: 8px; margin-left: 4px; }
.tree ul ul li { position: relative; padding-left: 4px; }
.tree ul ul li::before { content: ""; position: absolute; left: -7px; top: 4px; width: 8px; border-top: 1px solid #e0e0e0; }
.tree svg { display: inline-block; vertical-align: top; margin: 0 2px 0 1px; }
.tg { display: inline-block; width: 5px; height: 5px; margin: 0 1px 0 0; vertical-align: middle; }
.tree ul .tg { margin-right: 4px; }
.plus, .minus { border: 1px solid #bbb; background: linear-gradient(#456, #456) center / 3px 1px no-repeat #fff; }
.plus { background: linear-gradient(#678, #678) center / 3px 1px no-repeat, linear-gradient(#678, #678) center / 1px 3px no-repeat #fff; }
.tree mark { display: inline-block; height: 7px; line-height: 7px; background: #e2e2e2; color: inherit; }
.bscroll { display: flex; align-items: center; height: 9px; margin-top: auto; background: #f0f0f0; }
.bthumb { width: 53px; height: 6px; margin-left: 4px; background: #ccc; }
.end { margin-left: auto; }

.status { display: flex; align-items: center; justify-content: space-between; height: 11px; background: #cbcbcb; color: #222; border-top: 1px solid #ddd; }
.sticons { display: flex; gap: 3px; margin-right: 32px; }
.filter { display: flex; }

.taskbar { display: flex; height: 6px; overflow: hidden; background: linear-gradient(90deg, #0c343c 40%, #0d2745 75%, #0d2340); }
.start { width: 20px; flex: none; }
.start::before { content: ""; display: block; width: 7px; height: 2px; margin: 4px 0 0 6px; background: #ddd; }
.search { width: 151px; flex: none; background: #f3f3f3; }
.search i { display: block; width: 5px; height: 5px; margin: 4px 0 0 8px; border: 1px solid #555; border-radius: 50%; }
.apps { display: flex; gap: 13px; padding-left: 7px; }
.apps i { width: 9px; height: 9px; margin-top: 4px; border-radius: 50%; }
.apps .o { width: 7px; border: 1px solid #ddd; }
.apps .t { border: 1px solid #9ab; border-radius: 0; }
.apps .edge { background: #29c0e0; }
.apps .folder { background: #f3bd3d; border-radius: 0; }
.apps .blue { background: #1674d4; }
.apps .red { background: #ea4335; }
.apps .revit { width: 11px; margin-top: 3px; border: 2px solid #e9f2fa; outline: 5px solid #42606a; border-radius: 0; background: #1c65ad; }
.apps .orange { background: #ef7f56; }
.tray { display: flex; margin-left: auto; margin-right: 11px; color: #fff; }
.warn { width: 3px; height: 3px; margin: 4px 83px 0 0; background: #efc92f; }
.clock { line-height: 7px; }
.note { width: 7px; height: 4px; margin: 4px 0 0 15px; background: #fff; }

.menu { position: absolute; left: 471px; top: 53px; width: 52px; padding: 1px; background: #f4f4f4; border: 1px solid #bbb; }
.mitem { display: flex; align-items: center; gap: 2px; width: 100%; height: 17px; padding-left: 1px; }
.mitem.on { background: #c4e8fa; outline: 1px solid #8ec3e4; }
.tooltip { position: absolute; left: 507px; top: 82px; width: 142px; padding: 3px 4px; background: #f0f0f0; border: 1px solid #ddd; border-radius: 1px; box-shadow: 0 1px 2px #bbb; }
.tooltip p { margin: 0; padding: 1px 0 3px; border-bottom: 1px solid #d5d5d5; color: #555; }
.tooltip b { font-weight: 600; }
.tfoot { display: flex; align-items: center; justify-content: space-between; padding-top: 3px; line-height: 6px; white-space: nowrap; }
.video { width: 34px; white-space: normal; }
.tfoot svg { border-left: 1px solid #bbb; width: 12px; padding-left: 3px; }

.frame { position: absolute; border: 7px solid #03135a; }
.f10 { left: 460px; top: 45px; width: 74px; height: 36px; }
.f11 { left: 257px; top: 132px; width: 328px; height: 163px; }
.f12 { left: 137px; top: 62px; width: 85px; height: 36px; }
.badge { position: absolute; width: 45px; height: 45px; border-radius: 50%; background: #03135a; color: #fff; font: 900 22px/45px Inter, "Open Sans", sans-serif; text-align: center; }
.b10 { left: 512px; top: 61px; }
.b11 { left: 243px; top: 121px; }
.b12 { left: 194px; top: 81px; }
.tip { position: absolute; left: 516px; top: 231px; width: 130px; height: 130px; border-radius: 50%; background: #03135a; }
```
